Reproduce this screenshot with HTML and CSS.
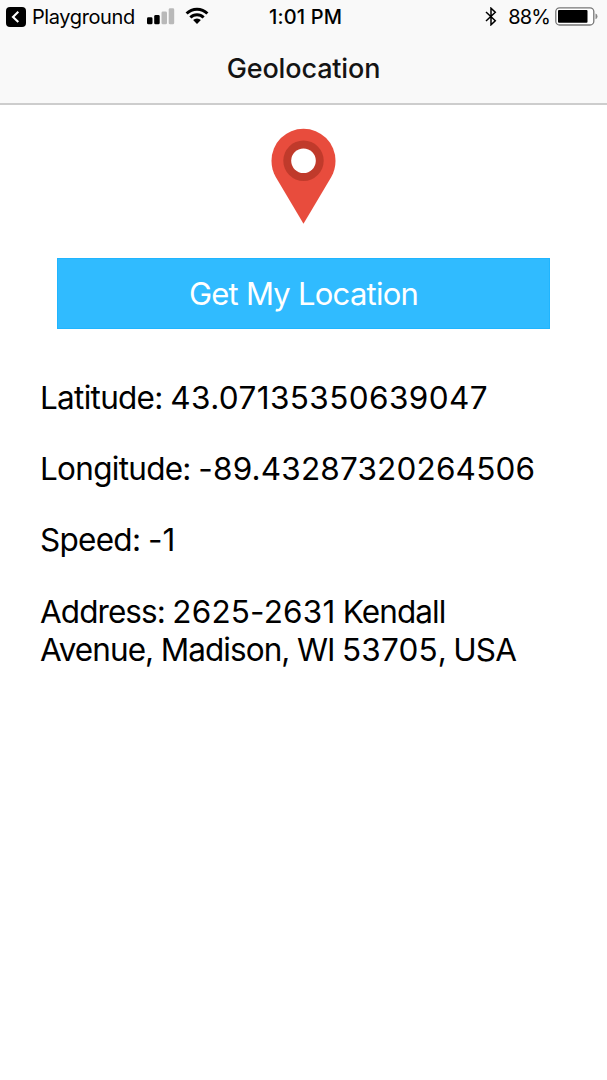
FILE: index.html
```html
<!DOCTYPE html>
<html lang="en">
<head>
<meta charset="utf-8">
<title>Geolocation</title>
<link rel="stylesheet" href="styles.css">
</head>
<body>
<header class="header">
  <div class="status">
    <div class="status-left">
      <svg class="back" width="20" height="20" viewBox="0 0 20 20"><rect width="20" height="20" rx="4"/><path d="M12.3 4.8 7 9.9l5.3 5.1" fill="none" stroke="#fff" stroke-width="2.1"/></svg>
      <span class="carrier">Playground</span>
      <svg class="signal" width="28" height="17" viewBox="0 0 28 17"><rect y="9.3" width="5.5" height="7" rx="1.4"/><rect x="7.2" y="7" width="5.5" height="9.3" rx="1.4"/><rect x="14.5" y="3.5" width="5.5" height="12.8" rx="1.4" fill="#b9b9b9"/><rect x="21.7" y="0.3" width="5.5" height="16" rx="1.4" fill="#b9b9b9"/></svg>
      <svg class="wifi" width="24" height="18" viewBox="0 0 24 18"><g fill="none" stroke="#000" stroke-width="3"><path d="M1.6 6.5a14.7 14.7 0 0 1 20.8 0"/><path d="M5.4 10.5a9.3 9.3 0 0 1 13.2 0"/></g><path d="M12 17 8.1 13.1a5.5 5.5 0 0 1 7.8 0z"/></svg>
    </div>
    <span class="time">1:01 PM</span>
    <div class="status-right">
      <svg class="bluetooth" width="12" height="19" viewBox="0 0 12 19"><path d="M1 5 10.3 13.7 6 17.8V1.2l4.3 4.1L1 14" fill="none" stroke="#000" stroke-width="1.5"/></svg>
      <span class="percent">88%</span>
      <svg class="battery" width="43" height="19" viewBox="0 0 43 19"><rect x=".8" y=".8" width="38" height="17.2" rx="3.8" fill="#fff" stroke="#777" stroke-width="1.3"/><rect x="3" y="3" width="29.5" height="12.8" rx="1"/><path d="M40.5 6.5q2 .8 2 2.9t-2 2.9z" fill="#888"/></svg>
    </div>
  </div>
  <h1 class="title">Geolocation</h1>
</header>
<main class="content">
  <svg class="pin" width="65" height="97" viewBox="0 0 66 98"><path d="M33 97 4.8 49.5C2 44.6 .5 39 .5 33a32.5 32.5 0 0 1 65 0c0 6-1.5 11.6-4.3 16.5z" fill="#e84c3d"/><circle cx="33" cy="33" r="20.5" fill="#c03a2b"/><circle cx="33" cy="33" r="12.5" fill="#fff"/></svg>
  <button class="button">Get My Location</button>
  <div class="details">
    <p>Latitude: <span class="number latitude">43.07135350639047</span></p>
    <p>Longitude: <span class="number">-89.43287320264506</span></p>
    <p>Speed: <span class="number">-1</span></p>
    <p class="address">Address: <span class="number">2625-2631</span> Kendall<br>Avenue, Madison, WI <span class="number">53705</span>, USA</p>
  </div>
</main>
</body>
</html>
```
FILE: styles.css
```css
* { box-sizing: border-box; }
body { margin: 0; min-height: 1080px; background: #fff; color: #000; font-family: Inter, "Liberation Sans", sans-serif; }
svg { display: block; flex: none; }
.header { height: 105px; background: #f9f9f9; border-bottom: 2px solid #cdcdcd; }
.status { display: grid; grid-template-columns: 263px 1fr auto; align-items: start; height: 34px; padding: 7px 9px 0 6px; font-size: 20px; line-height: 20px; }
.status-left, .status-right { display: flex; }
.carrier { margin-left: 6px; width: 108px; letter-spacing: -.4px; }
.signal { margin-left: 7px; margin-top: 1px; }
.wifi { margin-left: 10px; }
.time { font-weight: 550; letter-spacing: .15px; }
.percent { margin: 0 5px 0 11px; letter-spacing: -.9px; }
.title { margin: 0; padding-top: 19px; font-size: 27px; line-height: 32px; font-weight: 550; text-align: center; color: #141414; letter-spacing: -.15px; }
.content { display: flex; flex-direction: column; align-items: center; padding-top: 23px; }
.button { width: 493px; height: 71px; margin: 33px 0 0; padding: 0; border: 1px solid #20b5ff; background: #30bbff; color: #fff; font: 400 31px/38px Inter, "Liberation Sans", sans-serif; letter-spacing: -.75px; }
.details { align-self: stretch; margin-top: 50px; padding-left: 40px; font-size: 31.5px; line-height: 38px; letter-spacing: -.72px; word-spacing: -.5px; white-space: nowrap; }
.details p { margin: 0 0 33.2px; }
.number { letter-spacing: .17px; }
.latitude { letter-spacing: .4px; }
.details .address { letter-spacing: -.93px; }
```
